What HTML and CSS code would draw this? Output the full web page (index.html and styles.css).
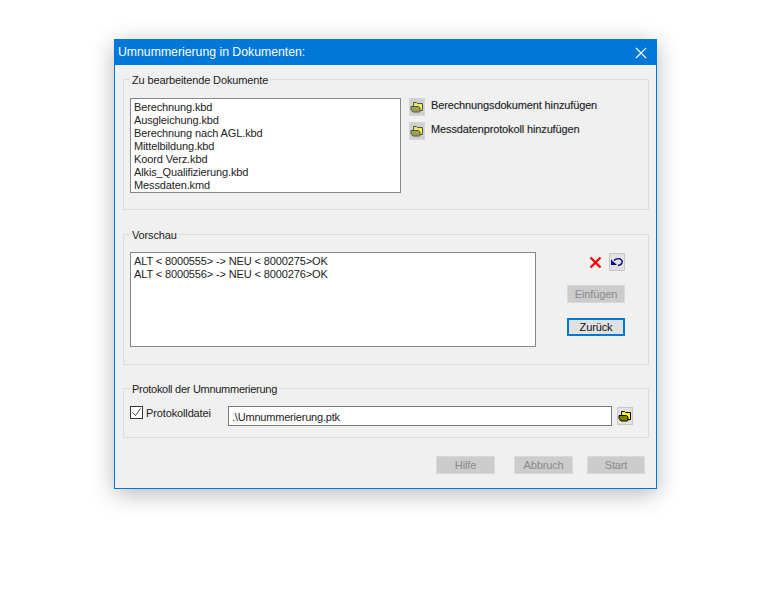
FILE: index.html
```html
<!DOCTYPE html>
<html lang="de">
<head>
<meta charset="utf-8">
<title>Umnummerierung in Dokumenten</title>
<link rel="stylesheet" href="styles.css">
</head>
<body>
<svg class="defs" width="0" height="0" aria-hidden="true">
  <symbol id="folder" viewBox="0 0 14 14">
    <path d="M3.500 2.500h3l1 1h5v7h-9z" fill="#ffff00" stroke="#000" stroke-width="1"/>
    <path d="M1 6.500h7.500l1.500 1.500v3.500l-.5.500H3L1 9.500z" fill="#808000" stroke="#000" stroke-width="1"/>
  </symbol>
</svg>
<main class="dialog">
  <header class="titlebar">
    <span>Umnummerierung in Dokumenten:</span>
    <svg class="close" width="12" height="12" viewBox="0 0 12 12"><path d="M1 1l10 10M11 1L1 11" stroke="#fff" stroke-width="1.100" fill="none"/></svg>
  </header>
  <div class="content">
    <fieldset class="group group-docs">
      <legend>Zu bearbeitende Dokumente</legend>
      <ul class="listbox docs">
        <li>Berechnung.kbd</li>
        <li>Ausgleichung.kbd</li>
        <li>Berechnung nach AGL.kbd</li>
        <li>Mittelbildung.kbd</li>
        <li>Koord Verz.kbd</li>
        <li>Alkis_Qualifizierung.kbd</li>
        <li>Messdaten.kmd</li>
      </ul>
      <div class="adders">
        <div class="adder">
          <button class="iconbtn disabled-icon"><svg width="14" height="14"><use href="#folder"/></svg></button>
          <span>Berechnungsdokument hinzufügen</span>
        </div>
        <div class="adder">
          <button class="iconbtn disabled-icon"><svg width="14" height="14"><use href="#folder"/></svg></button>
          <span>Messdatenprotokoll hinzufügen</span>
        </div>
      </div>
    </fieldset>
    <fieldset class="group group-preview">
      <legend>Vorschau</legend>
      <ul class="listbox preview">
        <li>ALT &lt; 8000555&gt; -&gt; NEU &lt; 8000275&gt;OK</li>
        <li>ALT &lt; 8000556&gt; -&gt; NEU &lt; 8000276&gt;OK</li>
      </ul>
      <div class="preview-actions">
        <div class="icon-row">
          <svg class="redx" width="13" height="13" viewBox="0 0 13 13"><path d="M1.500 1.500l10 10M11.500 1.500l-10 10" stroke="#f00" stroke-width="2.400" fill="none"/></svg>
          <button class="iconbtn undo"><svg width="14" height="12" viewBox="0 0 14 12"><path d="M4 4.500C6.500 2 10.500 2 12 4.500c1 2.500-1 4.500-4 5" fill="none" stroke="#000080" stroke-width="1.400"/><path d="M1 3.500v5.500h6z" fill="#000080"/></svg></button>
        </div>
        <button class="btn off">Einfügen</button>
        <button class="btn default">Zurück</button>
      </div>
    </fieldset>
    <fieldset class="group group-log">
      <legend class="tight">Protokoll der Umnummerierung</legend>
      <label class="check">
        <span class="box"><svg width="11" height="11" viewBox="0 0 11 11"><path d="M1.500 5.500l3 3 5-7" fill="none" stroke="#444" stroke-width="1"/></svg></span>
        <span>Protokolldatei</span>
      </label>
      <div class="field">.\Umnummerierung.ptk</div>
      <button class="iconbtn browse"><svg width="14" height="14"><use href="#folder"/></svg></button>
    </fieldset>
    <footer class="buttons">
      <button class="btn off">Hilfe</button>
      <button class="btn off">Abbruch</button>
      <button class="btn off">Start</button>
    </footer>
  </div>
</main>
</body>
</html>
```
FILE: styles.css
```css
* { box-sizing: border-box; }
html, body { margin: 0; background: #fff; }
body { height: 599px; overflow: hidden; padding: 39px 0 0 114px; font: 11px/13px "Liberation Sans", Arial, sans-serif; letter-spacing: -.13px; color: #222; }
.defs { position: absolute; }
.dialog { width: 543px; height: 450px; border: 1px solid #0078d7; background: #f0f0f0; box-shadow: 0 5px 22px rgba(0,0,0,.28); display: flex; flex-direction: column; }
.titlebar { height: 25px; flex: none; background: #0078d7; color: #fff; display: flex; align-items: center; justify-content: space-between; padding: 0 9px 0 3px; font-size: 12.250px; letter-spacing: 0; }
.content { padding: 14px 8px 0; display: flex; flex-direction: column; }
.group { margin: 0; padding: 0; border: 1px solid #dcdcdc; min-width: 0; display: flex; position: relative; width: 526px; }
.group legend { padding: 0 2px; margin-left: 6px; line-height: 13px; height: 13px; position: absolute; top: -6px; left: 0; background: #f0f0f0; }
.group legend.tight { letter-spacing: -.28px; }
.group-docs { height: 131px; padding: 18px 6px 0; gap: 8px; }
.group-preview { height: 131px; margin-top: 24px; padding: 17px 6px 0; gap: 31px; }
.group-log { height: 50px; margin-top: 23px; padding: 17px 6px 0; align-items: flex-start; }
.listbox { list-style: none; margin: 0; padding: 2px 3px; background: #fff; border: 1px solid #828790; }
.docs { width: 271px; height: 95px; }
.preview { width: 406px; height: 95px; }
.adders { display: flex; flex-direction: column; gap: 6px; }
.adder { display: flex; align-items: flex-start; gap: 6px; height: 18px; }
.adder span { margin-top: 1px; text-shadow: 0 0 1px rgba(90,90,110,.3); }
.iconbtn { width: 16px; height: 18px; padding: 0; border: 1px solid #c8c8c8; background: #e1e1e1; display: flex; align-items: center; justify-content: center; }
.disabled-icon { background: #cfcfcf; border-color: #d6d6d6; }
.disabled-icon svg { opacity: .6; }
.preview-actions { width: 58px; display: flex; flex-direction: column; align-items: flex-end; }
.icon-row { display: flex; align-items: center; gap: 7px; height: 18px; margin-top: 1px; }
.btn { width: 58px; height: 18px; padding: 0; font: inherit; letter-spacing: inherit; color: #111; border: 1px solid #adadad; background: #e1e1e1; }
.btn.off { background: #cccccc; border-color: #d8d8d8; color: #8a8a8a; }
.preview-actions .btn.off { margin-top: 14px; }
.btn.default { border: 2px solid #0078d7; margin-top: 15px; }
.check { display: flex; align-items: flex-start; gap: 3px; width: 98px; }
.box { width: 13px; height: 13px; background: #fff; border: 1px solid #333; display: flex; align-items: center; justify-content: center; }
.check span:last-child { margin-top: 1px; }
.field { width: 384px; height: 20px; padding: 4px 3px; background: #fff; border: 1px solid #7a7a7a; letter-spacing: -.2px; }
.browse { margin: 1px 0 0 5px; }
.buttons { display: flex; justify-content: flex-end; gap: 19px; margin-top: 18px; padding-right: 3px; }
.buttons .btn:not(:last-child) { width: 59px; }
.buttons .btn:last-child { margin-left: -5px; }
```
